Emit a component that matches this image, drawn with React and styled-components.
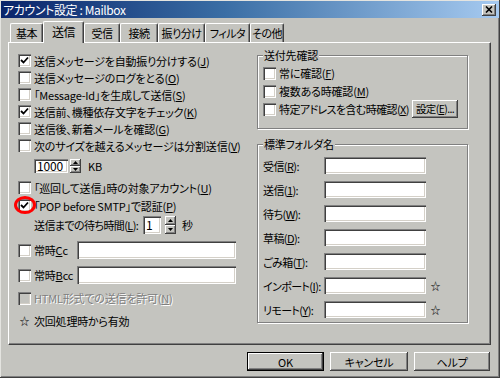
import React from "react";
import styled, { createGlobalStyle, css } from "styled-components";

const BG = "#c4c4bf";

const GlobalStyle = createGlobalStyle`
  html, body { margin: 0; padding: 0; background: ${BG}; }
  body {
    font-family: "Noto Sans CJK JP", "Noto Sans", sans-serif;
    font-size: 11px;
    line-height: 16px;
    letter-spacing: -0.2px;
    color: #000;
    font-feature-settings: "palt";
  }
  * { box-sizing: border-box; }
`;

const raised = css`
  box-shadow: inset -1px -1px #404040, inset 1px 1px #fff, inset -2px -2px #808080;
`;
const sunken = css`
  box-shadow: inset 1px 1px #808080, inset 2px 2px #404040, inset -1px -1px #fff,
    inset -2px -2px #d4d0c8;
`;

const Window = styled.div`
  position: relative;
  width: 500px;
  height: 378px;
  padding: 1px;
  background: ${BG};
  box-shadow: inset -1px -1px #404040, inset 1px 1px #e4e4e0, inset -2px -2px #808080;
  display: flex;
  flex-direction: column;
`;

const TitleBar = styled.div`
  height: 17px;
  display: flex;
  align-items: center;
  padding: 0 3px 0 2px;
  background: linear-gradient(90deg, #0a246a 0%, #3a6ea5 45%, #a6caf0 100%);
  color: #fff;
`;

const TitleText = styled.div`
  flex: 1;
  font-size: 12px;
  letter-spacing: -0.4px;
`;

const CloseBtn = styled.div`
  width: 14px;
  height: 12px;
  background: ${BG};
  ${raised};
  display: flex;
  align-items: center;
  justify-content: center;
`;

const Body = styled.div`
  flex: 1;
  display: flex;
  flex-direction: column;
  padding: 3px 8px 0 7px;
`;

const TabStrip = styled.div`
  height: 21px;
  display: flex;
  align-items: flex-end;
  padding-left: 2px;
`;

const Tab = styled.div`
  width: ${(p) => p.$w}px;
  height: 19px;
  border-top: 1px solid #fff;
  border-left: 1px solid #fff;
  border-right: 1px solid #404040;
  border-radius: 2px 2px 0 0;
  box-shadow: inset -1px 0 #808080;
  display: flex;
  align-items: center;
  justify-content: center;
  background: ${BG};
  white-space: nowrap;
  font-size: 11px;
  letter-spacing: -0.5px;
  ${(p) =>
    p.$active &&
    css`
      height: 22px;
      margin-bottom: -1px;
      position: relative;
      z-index: 1;
      padding-bottom: 2px;
      font-size: 12px;
    `}
`;

const Panel = styled.div`
  height: 303px;
  border-top: 1px solid #fff;
  border-left: 1px solid #fff;
  border-right: 1px solid #404040;
  border-bottom: 1px solid #404040;
  box-shadow: inset -1px -1px #808080;
  display: flex;
`;

const LeftCol = styled.div`
  width: 248px;
  padding: 9px 0 0 9px;
  display: flex;
  flex-direction: column;
`;

const RightCol = styled.div`
  width: 211px;
  padding-top: 4px;
  display: flex;
  flex-direction: column;
`;

const Row = styled.div`
  height: ${(p) => p.$h || 17}px;
  margin-top: ${(p) => p.$mt || 0}px;
  padding-left: ${(p) => p.$indent || 0}px;
  display: flex;
  align-items: center;
  white-space: nowrap;
`;

const Box = styled.div`
  width: 13px;
  height: 13px;
  flex: none;
  margin-right: 3px;
  background: ${(p) => (p.$disabled ? BG : "#fff")};
  ${sunken};
  display: flex;
  align-items: center;
  justify-content: center;
`;

const Key = styled.span`
  text-decoration: underline;
`;

const Label = styled.span`
  ${(p) =>
    p.$w &&
    css`
      width: ${p.$w}px;
      flex: none;
    `}
  ${(p) =>
    p.$ml &&
    css`
      margin-left: ${p.$ml}px;
    `}
  ${(p) =>
    p.$tight &&
    css`
      letter-spacing: -0.6px;
    `}
  ${(p) =>
    p.$disabled &&
    css`
      color: #808080;
      text-shadow: 1px 1px #fff;
    `}
`;

const TextField = styled.div`
  width: ${(p) => p.$w}px;
  height: ${(p) => p.$h || 17}px;
  flex: none;
  background: #fff;
  ${sunken};
  padding: 0 3px;
  display: flex;
  align-items: center;
  font-size: 12px;
`;

const Spin = styled.div`
  width: 11px;
  height: ${(p) => p.$h}px;
  margin-left: ${(p) => p.$ml || 1}px;
  flex: none;
  display: flex;
  flex-direction: column;
`;

const SpinHalf = styled.div`
  flex: 1;
  background: ${BG};
  ${raised};
  display: flex;
  align-items: center;
  justify-content: center;
`;

const Unit = styled.span`
  margin-left: ${(p) => p.$ml}px;
`;

const Star = styled.span`
  font-size: 10px;
  width: ${(p) => p.$w || 13}px;
  margin-left: ${(p) => p.$ml || 0}px;
  flex: none;
  display: inline-flex;
  justify-content: center;
`;

const Group = styled.fieldset`
  margin: ${(p) => p.$mt || 0}px 0 0 0;
  padding: ${(p) => p.$pad};
  min-width: 0;
  width: 211px;
  border: 1px solid #808080;
  box-shadow: inset 1px 1px #fff, 1px 1px #fff;
  display: flex;
  flex-direction: column;
  gap: ${(p) => p.$gap || 0}px;
`;

const Legend = styled.legend`
  padding: 0 1px;
  margin-left: 0;
  line-height: 16px;
  background: ${BG};
`;

const Button = styled.div`
  width: ${(p) => p.$w}px;
  height: ${(p) => p.$h}px;
  margin-left: ${(p) => (p.$auto ? "auto" : "0")};
  background: ${BG};
  ${raised};
  display: flex;
  align-items: center;
  justify-content: center;
  flex: none;
  white-space: nowrap;
  ${(p) =>
    p.$small &&
    css`
      font-size: 10.5px;
      letter-spacing: -0.6px;
    `}
  ${(p) =>
    p.$default &&
    css`
      border: 1px solid #000;
    `}
`;

const ButtonRow = styled.div`
  display: flex;
  justify-content: flex-end;
  gap: 6px;
  margin-top: 7px;
  margin-right: 1px;
`;

const Overlay = styled.svg`
  position: absolute;
  left: 0;
  top: 0;
  pointer-events: none;
`;

const Check = () => (
  <svg width="9" height="9" viewBox="0 0 9 9">
    <polyline points="1,4 3.5,6.5 8,1.5" fill="none" stroke="#000" strokeWidth="1.8" />
  </svg>
);

const CheckBox = ({ checked, disabled }) => (
  <Box $disabled={disabled}>{checked && <Check />}</Box>
);

const Arrow = ({ up }) => (
  <svg width="5" height="3" viewBox="0 0 5 3">
    <polygon points={up ? "2.5,0 5,3 0,3" : "0,0 5,0 2.5,3"} fill="#000" />
  </svg>
);

const SpinBtn = ({ h, ml }) => (
  <Spin $h={h} $ml={ml}>
    <SpinHalf>
      <Arrow up />
    </SpinHalf>
    <SpinHalf>
      <Arrow />
    </SpinHalf>
  </Spin>
);

const tabs = [
  ["基本", 33],
  ["送信", 41, true],
  ["受信", 36],
  ["接続", 38],
  ["振り分け", 47],
  ["フィルタ", 45],
  ["その他", 34],
];

const checkRows = [
  [true, "送信メッセージを自動振り分けする(", "J"],
  [false, "送信メッセージのログをとる(", "O"],
  [false, "「Message-Id」を生成して送信(", "S"],
  [true, "送信前、機種依存文字をチェック(", "K"],
  [false, "送信後、新着メールを確認(", "G"],
  [false, "次のサイズを越えるメッセージは分割送信(", "V"],
];

const folders = [
  ["受信(", "R", "):", false],
  ["送信(", "1", "):", false],
  ["待ち(", "W", "):", false],
  ["草稿(", "D", "):", false],
  ["ごみ箱(", "T", "):", false],
  ["インポート(", "I", "):", true],
  ["リモート(", "Y", "):", true],
];

export default function App() {
  return (
    <>
      <GlobalStyle />
      <Window>
        <TitleBar>
          <TitleText>アカウント設定 : Mailbox</TitleText>
          <CloseBtn>
            <svg width="8" height="7" viewBox="0 0 8 7">
              <path d="M1 0.5 L7 6.5 M7 0.5 L1 6.5" stroke="#000" strokeWidth="1.6" />
            </svg>
          </CloseBtn>
        </TitleBar>
        <Body>
          <TabStrip>
            {tabs.map(([t, w, a]) => (
              <Tab key={t} $w={w} $active={a}>
                {t}
              </Tab>
            ))}
          </TabStrip>
          <Panel>
            <LeftCol>
              {checkRows.map(([c, t, k]) => (
                <Row key={t}>
                  <CheckBox checked={c} />
                  <Label>
                    {t}
                    <Key>{k}</Key>)
                  </Label>
                </Row>
              ))}
              <Row $h={14} $mt={5} $indent={16}>
                <TextField $w={34} $h={14}>
                  1000
                </TextField>
                <SpinBtn h={14} ml={2} />
                <Unit $ml={7}>KB</Unit>
              </Row>
              <Row $mt={6}>
                <CheckBox />
                <Label>
                  「巡回して送信」時の対象アカウント(<Key>U</Key>)
                </Label>
              </Row>
              <Row $mt={1}>
                <CheckBox checked />
                <Label>
                  「POP before SMTP」で認証(<Key>P</Key>)
                </Label>
              </Row>
              <Row $h={18} $mt={2} $indent={16}>
                <Label $w={109} $tight>
                  送信までの待ち時間(<Key>L</Key>):
                </Label>
                <TextField $w={18} $h={18}>
                  1
                </TextField>
                <SpinBtn h={18} ml={4} />
                <Unit $ml={6}>秒</Unit>
              </Row>
              <Row $h={18} $mt={7}>
                <CheckBox />
                <Label $w={43}>
                  常時<Key>C</Key>c
                </Label>
                <TextField $w={159} $h={18} />
              </Row>
              <Row $h={18} $mt={7}>
                <CheckBox />
                <Label $w={43}>
                  常時<Key>B</Key>cc
                </Label>
                <TextField $w={159} $h={18} />
              </Row>
              <Row $h={16} $mt={6}>
                <CheckBox disabled />
                <Label $disabled>
                  HTML形式での送信を許可(<Key>N</Key>)
                </Label>
              </Row>
              <Row $h={16} $mt={7}>
                <Star $w={13}>☆</Star>
                <Label $ml={3}>次回処理時から有効</Label>
              </Row>
            </LeftCol>
            <RightCol>
              <Group $pad="1px 9px 10px 5px">
                <Legend>送付先確認</Legend>
                <Row $h={18}>
                  <CheckBox />
                  <Label>
                    常に確認(<Key>F</Key>)
                  </Label>
                </Row>
                <Row $h={18}>
                  <CheckBox />
                  <Label>
                    複数ある時確認(<Key>M</Key>)
                  </Label>
                </Row>
                <Row $h={18}>
                  <CheckBox />
                  <Label $tight>
                    特定アドレスを含む時確認(<Key>X</Key>)
                  </Label>
                  <Button $w={46} $h={18} $auto $small>
                    設定(<Key>E</Key>)...
                  </Button>
                </Row>
              </Group>
              <Group $mt={7} $pad="5px 8px 4px 5px" $gap={7}>
                <Legend>標準フォルダ名</Legend>
                {folders.map(([a, k, b, star]) => (
                  <Row key={a} $h={17}>
                    <Label $w={61} $tight>
                      {a}
                      <Key>{k}</Key>
                      {b}
                    </Label>
                    <TextField $w={102} $h={17} />
                    {star && <Star $ml={3}>☆</Star>}
                  </Row>
                ))}
              </Group>
            </RightCol>
          </Panel>
          <ButtonRow>
            <Button $w={77} $h={19} $default>
              OK
            </Button>
            <Button $w={78} $h={19}>
              キャンセル
            </Button>
            <Button $w={76} $h={19}>
              ヘルプ
            </Button>
          </ButtonRow>
        </Body>
        <Overlay width="500" height="378" viewBox="0 0 500 378">
          <ellipse cx="64.5" cy="32" rx="17.5" ry="9.5" fill="none" stroke="#f00" strokeWidth="3" />
          <ellipse cx="25" cy="205" rx="9.5" ry="7.5" fill="none" stroke="#f00" strokeWidth="3" />
        </Overlay>
      </Window>
    </>
  );
}
